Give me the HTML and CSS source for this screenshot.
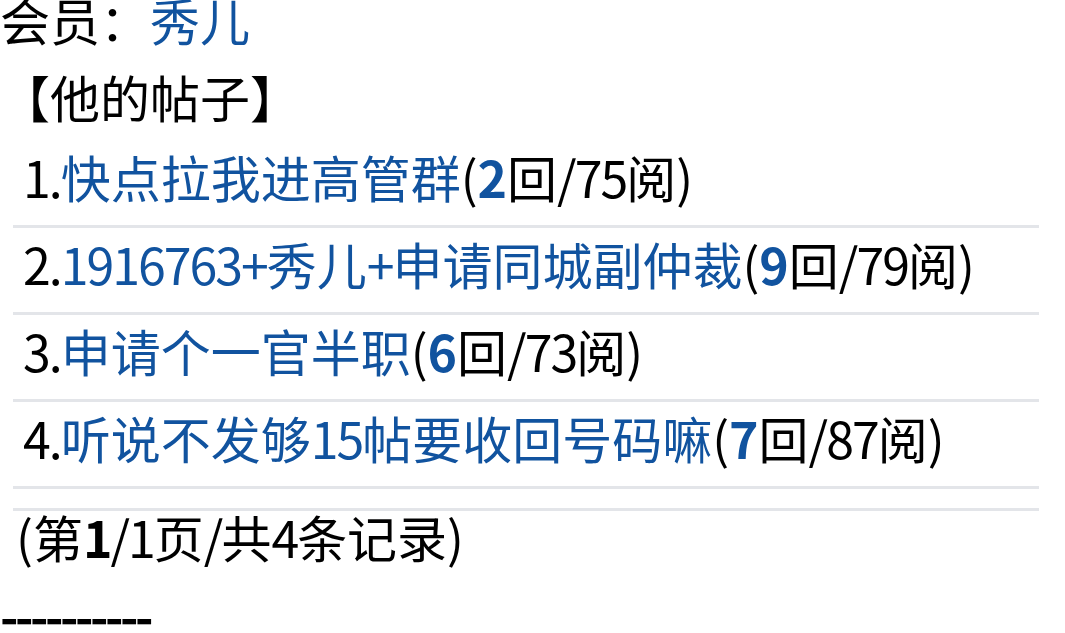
FILE: index.html
```html
<!DOCTYPE html>
<html lang="zh-CN">
<head>
<meta charset="utf-8">
<title>他的帖子</title>
<link rel="stylesheet" href="styles.css">
</head>
<body>
<div class="member">会员：<a class="link" href="#">秀儿</a></div>
<div class="title">【他的帖子】</div>
<div class="list">
  <div class="row"><span class="n">1.</span><a class="link" href="#">快点拉我进高管群</a>(<a class="link num" href="#">2</a>回<span class="n">/75</span>阅)</div>
  <div class="row"><span class="n">2.</span><a class="link" href="#"><span class="n">1916763+</span>秀儿<span class="n">+</span>申请同城副仲裁</a>(<a class="link num" href="#">9</a>回<span class="n">/79</span>阅)</div>
  <div class="row"><span class="n">3.</span><a class="link" href="#">申请个一官半职</a>(<a class="link num" href="#">6</a>回<span class="n">/73</span>阅)</div>
  <div class="row"><span class="n">4.</span><a class="link" href="#">听说不发够<span class="n">15</span>帖要收回号码嘛</a>(<a class="link num" href="#">7</a>回<span class="n">/87</span>阅)</div>
  <div class="pager">(第<b class="n">1</b><span class="n">/1</span>页<span class="n">/</span>共<span class="n">4</span>条记录)</div>
</div>
<div class="dashes">----------</div>
</body>
</html>
```

FILE: styles.css
```css
html, body {
  margin: 0;
  padding: 0;
  background: #ffffff;
}
body {
  font-family: "Noto Sans CJK SC", "Noto Sans", sans-serif;
  font-size: 50px;
  color: #000000;
}
.link {
  color: #11539f;
  text-decoration: none;
}
.num {
  font-weight: bold;
}
.n {
  letter-spacing: -2px;
}
.member {
  line-height: 38px;
}
.title {
  line-height: 78px;
  margin-top: 19px;
}
.list {
  margin: 6px 26px 0 13px;
}
.row {
  line-height: 70px;
  height: 84px;
  padding-left: 10px;
  border-bottom: 3px solid #e3e5e9;
  white-space: nowrap;
}
.pager {
  margin-top: 19px;
  border-top: 3px solid #e3e5e9;
  line-height: 50px;
  padding-left: 3px;
}
.pager b {
  font-weight: bold;
}
.dashes {
  margin-top: 28px;
  line-height: 50px;
  font-weight: bold;
  letter-spacing: -3.5px;
}
```
